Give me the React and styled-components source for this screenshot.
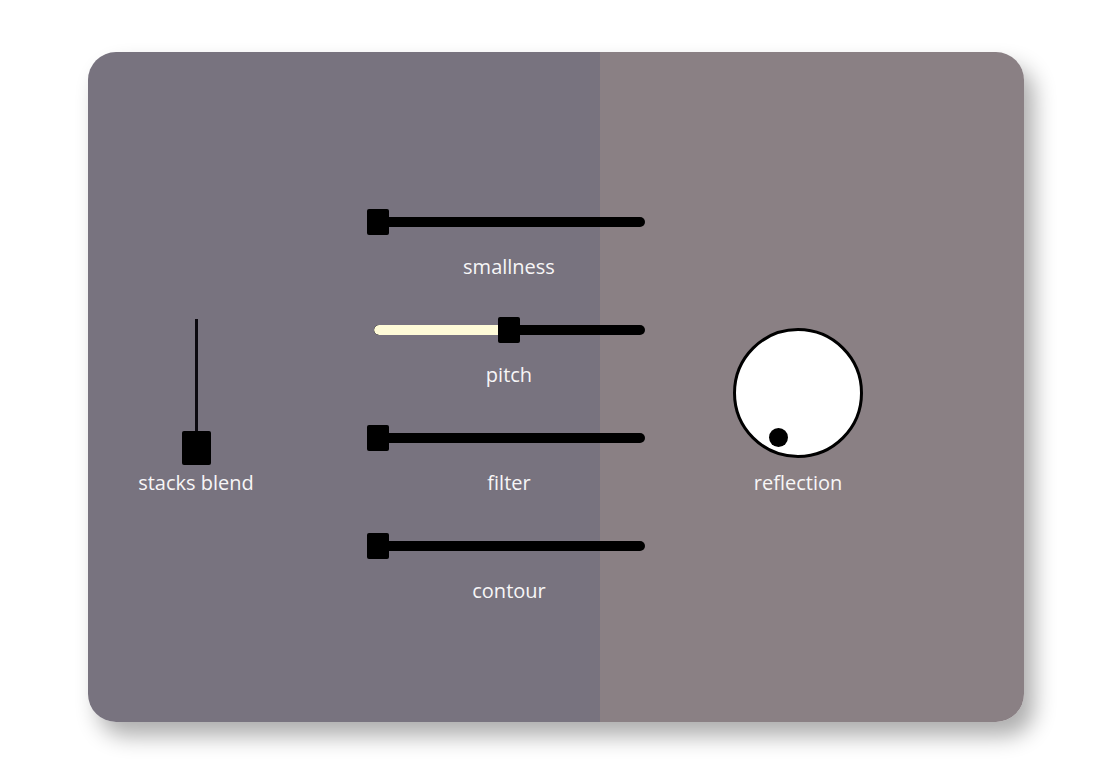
import React from "react";
import styled, { createGlobalStyle } from "styled-components";

const Global = createGlobalStyle`
  html, body { margin: 0; padding: 0; background: #ffffff; }
  body { font-family: "Open Sans", "Noto Sans", sans-serif; }
`;

const Page = styled.div`
  width: 1114px;
  height: 774px;
  padding: 52px 0 0 88px;
  box-sizing: border-box;
`;

const Panel = styled.div`
  width: 936px;
  height: 670px;
  border-radius: 28px;
  background: linear-gradient(to right, #78737f 0, #78737f 512px, #8a8084 512px, #8a8084 100%);
  box-shadow: 10px 14px 22px rgba(0, 0, 0, 0.32);
  display: flex;
  align-items: flex-start;
  box-sizing: border-box;
  padding-left: 44px;
`;

const Label = styled.div`
  color: #f7f6f7;
  font-size: 20px;
  line-height: 27px;
  text-align: center;
  white-space: nowrap;
`;

/* vertical slider */
const VColumn = styled.div`
  width: 128px;
  margin-top: 267px;
  display: flex;
  flex-direction: column;
  align-items: center;
`;

const VTrack = styled.div`
  position: relative;
  width: 29px;
  height: 146px;
`;

const VStick = styled.div`
  width: 3px;
  height: 140px;
  margin: 0 auto;
  background: #0c0a10;
`;

const VThumb = styled.div`
  position: absolute;
  left: 0;
  bottom: 0;
  width: 29px;
  height: 34px;
  border-radius: 2px;
  background: #000;
`;

/* horizontal sliders */
const HColumn = styled.div`
  width: 284px;
  margin-top: 157px;
  margin-left: 107px;
  display: flex;
  flex-direction: column;
  gap: 37px;
`;

const SliderRow = styled.div`
  display: flex;
  flex-direction: column;
  align-items: stretch;
`;

const HTrackArea = styled.div`
  position: relative;
  width: 278px;
  height: 26px;
  margin-bottom: 18px;
`;

const HBar = styled.div`
  position: absolute;
  left: 7px;
  right: 0;
  top: 8px;
  height: 10px;
  border-radius: 5px;
  background: #000;
  overflow: hidden;
`;

const HFill = styled.div`
  height: 100%;
  background: #fffbd8;
  border-radius: 5px;
`;

const HThumb = styled.div`
  position: absolute;
  top: 0;
  width: 22px;
  height: 26px;
  border-radius: 2px;
  background: #000;
`;

function HSlider({ label, value }) {
  const thumbLeft = value * (278 - 22);
  return (
    <SliderRow>
      <HTrackArea>
        <HBar>
          {value > 0 && <HFill style={{ width: `${thumbLeft + 4}px` }} />}
        </HBar>
        <HThumb style={{ left: `${thumbLeft}px` }} />
      </HTrackArea>
      <Label>{label}</Label>
    </SliderRow>
  );
}

/* knob */
const KColumn = styled.div`
  margin-top: 276px;
  margin-left: 67px;
  width: 160px;
  display: flex;
  flex-direction: column;
  align-items: center;
`;

const Knob = styled.div`
  position: relative;
  width: 130px;
  height: 130px;
  box-sizing: border-box;
  border: 3px solid #000;
  border-radius: 50%;
  background: #fff;
  margin-bottom: 11px;
`;

const KnobDot = styled.div`
  position: absolute;
  width: 19px;
  height: 19px;
  border-radius: 50%;
  background: #000;
`;

export default function App() {
  return (
    <>
      <Global />
      <Page>
        <Panel>
          <VColumn>
            <VTrack>
              <VStick />
              <VThumb />
            </VTrack>
            <Label style={{ marginTop: "4px" }}>stacks blend</Label>
          </VColumn>
          <HColumn>
            <HSlider label="smallness" value={0} />
            <HSlider label="pitch" value={0.512} />
            <HSlider label="filter" value={0} />
            <HSlider label="contour" value={0} />
          </HColumn>
          <KColumn>
            <Knob>
              <KnobDot style={{ left: "32.5px", top: "96.5px" }} />
            </Knob>
            <Label>reflection</Label>
          </KColumn>
        </Panel>
      </Page>
    </>
  );
}
